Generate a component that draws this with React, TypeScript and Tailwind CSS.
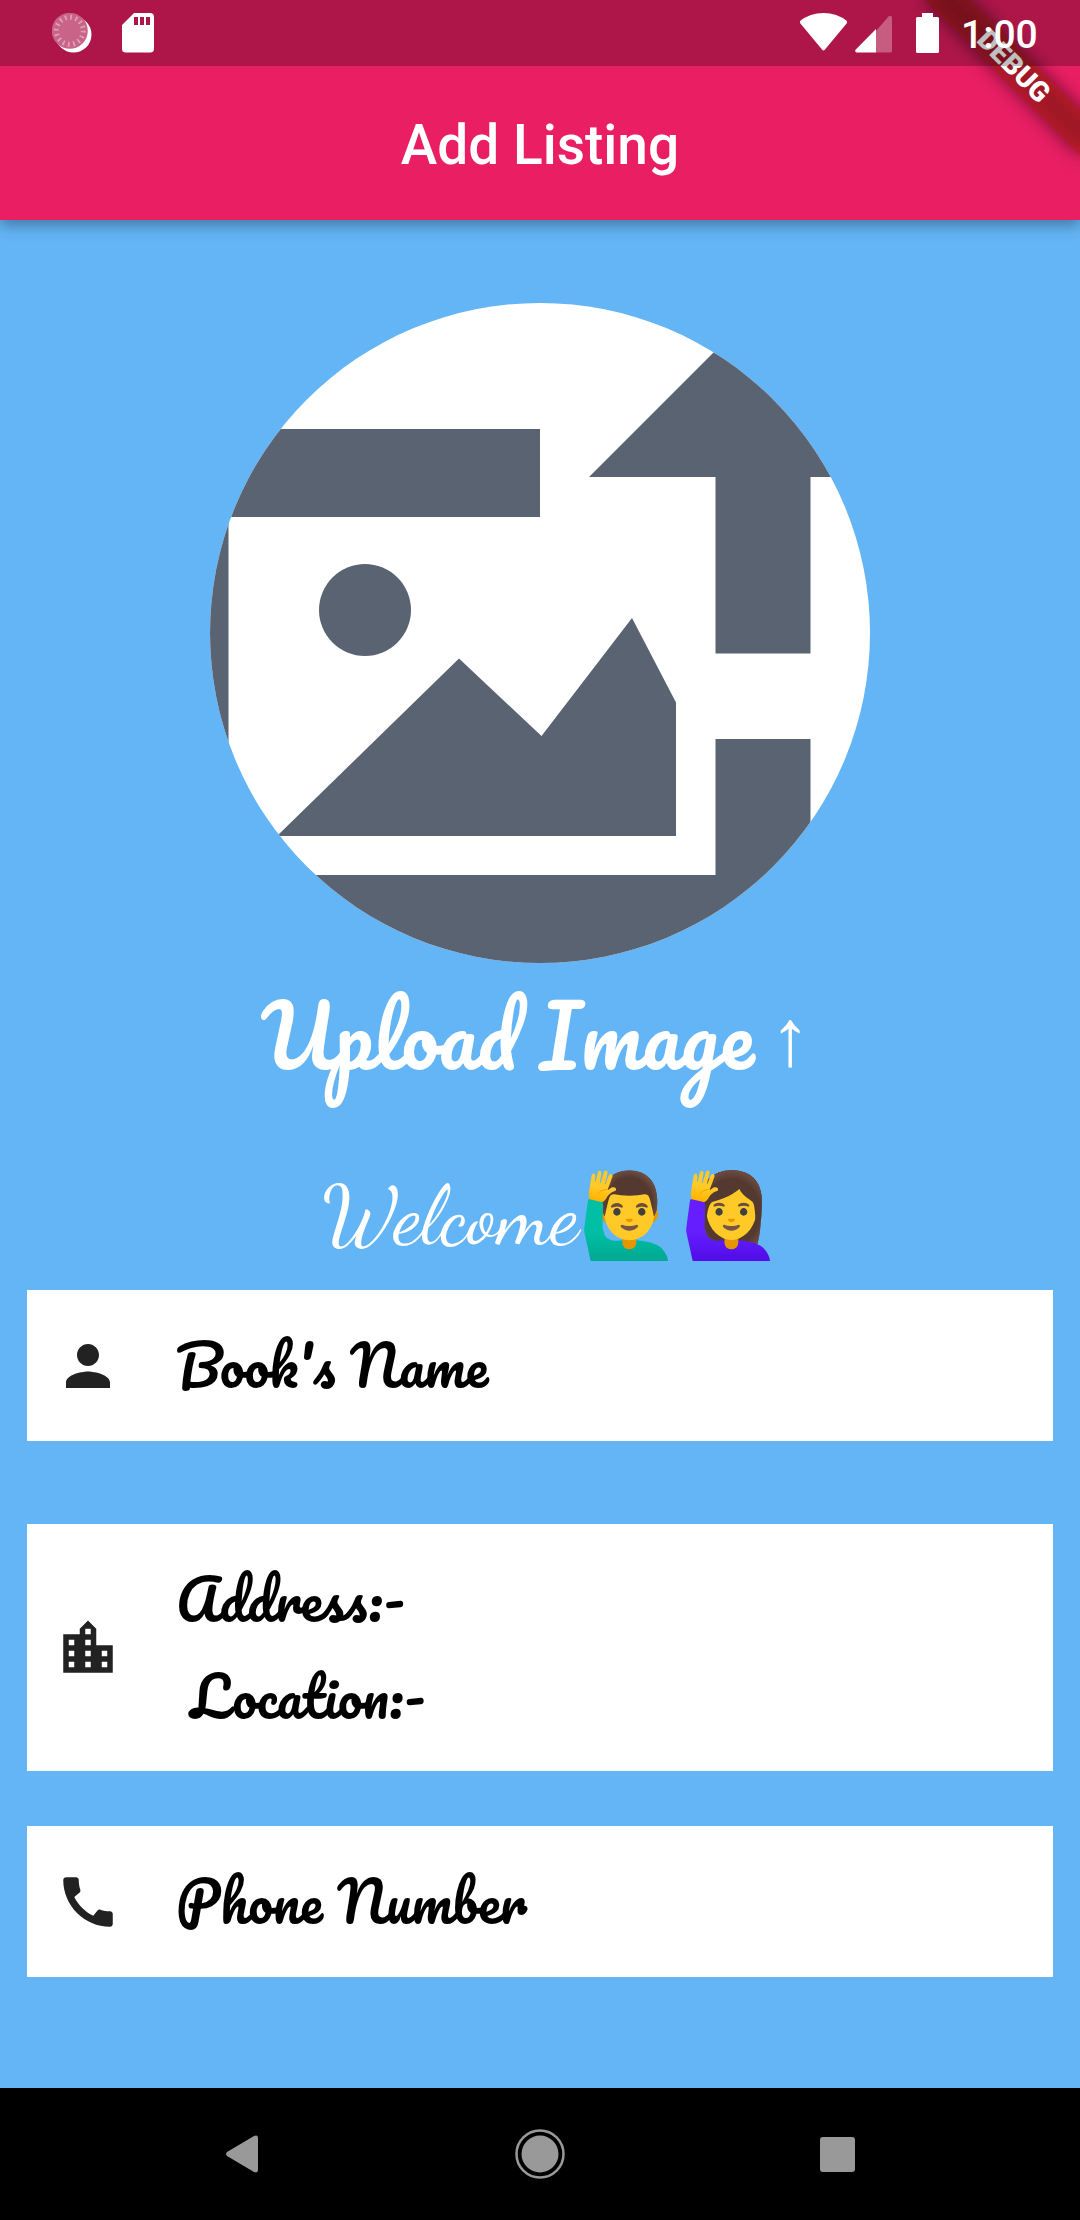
import React from "react";

function Card({ className, icon, children }: { className: string; icon: string; children: React.ReactNode }) {
  return (
    <div className={`mx-[27px] flex shrink-0 items-center bg-white pl-7 ${className}`}>
      <svg viewBox="0 0 24 24" className="h-[66px] w-[66px] shrink-0" fill="#222222">
        <path d={icon} />
      </svg>
      <div className="ml-[55px] flex flex-col whitespace-pre text-[55px] leading-[96.5px] text-black [font-family:Pacifico,cursive]">{children}</div>
    </div>
  );
}

const person = "M12 12c2.21 0 4-1.79 4-4s-1.79-4-4-4-4 1.79-4 4 1.79 4 4 4zm0 2c-2.67 0-8 1.34-8 4v2h16v-2c0-2.66-5.330-4-8-4z";
const city =
  "M15 11V5l-3-3-3 3v2H3v14h18V11h-6zm-8 8H5v-2h2v2zm0-4H5v-2h2v2zm0-4H5V9h2v2zm6 8h-2v-2h2v2zm0-4h-2v-2h2v2zm0-4h-2V9h2v2zm0-4h-2V5h2v2zm6 12h-2v-2h2v2zm0-4h-2v-2h2v2z";
const phone =
  "M20.01 15.38c-1.230 0-2.420-.2-3.530-.56-.35-.12-.74-.03-1.010.24l-1.570 1.970c-2.830-1.350-5.480-3.900-6.890-6.830l1.950-1.660c.27-.28.35-.67.24-1.020-.37-1.110-.56-2.300-.56-3.530 0-.54-.45-.99-.99-.99H4.190C3.650 3 3 3.240 3 3.990 3 13.280 10.730 21 20.010 21c.71 0 .99-.63.99-1.180v-3.450c0-.54-.45-.99-.99-.99z";

export default function App() {
  return (
    <div className="relative flex h-[2220px] w-[1080px] flex-col overflow-hidden bg-[#64b5f6] [font-family:Roboto,sans-serif]">
      <header className="z-10 flex h-[220px] shrink-0 items-center justify-center bg-[#e91e63] pt-[69px] shadow-[0_5px_14px_rgba(0,0,0,0.35)]">
        <h1 className="text-[55px] font-medium leading-[70px] text-white">Add Listing</h1>
      </header>

      {/* Debug ribbon across the top right corner */}
      <div className="absolute left-[970px] top-[77px] z-20 h-[33px] w-[220px] origin-[110px_-77px] rotate-45">
        <div className="absolute inset-0 bg-black/50 blur-[9px]" />
        <div className="relative flex h-full items-center justify-center bg-[#b71c1c]/63 text-[28px] font-black leading-none text-white">DEBUG</div>
      </div>

      {/* System status bar */}
      <div className="absolute inset-x-0 top-0 z-30 flex h-[66px] items-start bg-black/25 pl-[52px] pt-[13px]">
        <svg viewBox="0 0 40 40" className="h-10 w-10">
          <circle cx="21.500" cy="21.500" r="18" fill="#fff" />
          <circle cx="17.800" cy="17.800" r="18" fill="#c96488" />
          <circle cx="17.800" cy="17.800" r="13.500" fill="none" stroke="#dda0b5" strokeWidth="5" strokeDasharray="1.800 3.500" />
        </svg>
        <svg viewBox="0 0 32 40" className="ml-[30px] h-10 w-8">
          <path fillRule="evenodd" fill="#fff" d="M12 0H28Q32 0 32 4V36Q32 39.500 28 39.500H4Q0 39.500 0 36V12ZM12 4V12H16V4ZM18 4V12H22V4ZM24 4V12H28V4Z" />
        </svg>
        <svg viewBox="0 0 47 38" className="ml-[646px] h-[38px] w-[47px]">
          <path fill="#fff" d="M0 8Q10 0 23.500 0Q37 0 47 8V10L25 36.500Q23.500 38.500 22 36.500L0 10Z" />
        </svg>
        <svg viewBox="0 0 37 38" className="ml-2 mt-[1.500px] h-[38px] w-[37px]">
          <path fill="#fff" fillOpacity=".3" d="M21 16L33.500 1.500Q37 -.5 37 3V36Q37 37.500 35 37.500H21Z" />
          <path fill="#fff" d="M21 14V37.500H1.500Q-.8 36.500 .8 34.500Z" />
        </svg>
        <svg viewBox="0 0 23 40" className="ml-6 h-10 w-[23px]">
          <path fill="#fff" d="M6 0H17V4H21.500Q23 4 23 5.500V38.500Q23 40 21.500 40H1.500Q0 40 0 38.500V5.500Q0 4 1.500 4H6Z" />
        </svg>
        <span className="ml-[22px] mt-[1px] text-[39px] font-medium leading-[42px] text-white">1:00</span>
      </div>

      <main className="flex h-[1868px] shrink-0 flex-col pt-[83px]">
        <div className="h-[660px] w-[660px] shrink-0 self-center overflow-hidden rounded-full bg-white">
          <svg viewBox="210 303 660 660" className="h-full w-full" fill="#5a6372">
            <path d="M210 429H540V517H228.500V963H210ZM210 875H715.500V739H810.500V963H210Z" />
            <path d="M589 477L763 303L937 477H810.500V653.500H715.500V477Z" />
            <circle cx="365" cy="610" r="46" />
            <path d="M277 836L459 658.500L541.500 736L632 618L676 702.500V836Z" />
          </svg>
        </div>
        <div className="flex h-[145px] shrink-0 items-center whitespace-pre pl-[261px] text-white">
          <span className="text-[82.5px] leading-[145px] [font-family:Pacifico,cursive]">Upload Image</span>
          <span className="ml-4 mt-1 text-[80px] leading-[90px] [font-family:'Liberation_Sans',sans-serif]">↑</span>
        </div>
        <div className="mt-8 flex h-[150px] shrink-0 items-start whitespace-nowrap pl-[322px] pt-[30px] text-white">
          <span className="w-[256px] text-[82.5px] leading-[92px] [font-family:'Dancing_Script',cursive]">Welcome</span>
          <span className="text-[82.5px] leading-[92px] [font-family:'Noto_Color_Emoji',sans-serif]">🙋‍♂️🙋‍♀️</span>
        </div>
        <Card className="h-[151px]" icon={person}><span>Book's Name</span></Card>
        <Card className="mt-[83px] h-[247px]" icon={city}>
          <span>Address:-</span>
          <span>{" Location:-"}</span>
        </Card>
        <Card className="mt-[55px] h-[151px]" icon={phone}><span>Phone Number</span></Card>
      </main>

      <nav className="flex h-[132px] shrink-0 items-center bg-black">
        <svg viewBox="0 0 32 38" className="ml-[226px] h-[38px] w-8" fill="#999"><path d="M1 17L28 1Q32 -.5 32 3V35Q32 38.500 28 37L1 21Q-.8 19 1 17Z" /></svg>
        <svg viewBox="0 0 50 50" className="ml-[257px] h-[50px] w-[50px]"><circle cx="25" cy="25" r="23.500" fill="none" stroke="#999" strokeWidth="2.500" /><circle cx="25" cy="25" r="18.500" fill="#999" /></svg>
        <div className="ml-[255px] h-[35px] w-[35px] rounded-[3px] bg-[#999]" />
      </nav>
    </div>
  );
}
